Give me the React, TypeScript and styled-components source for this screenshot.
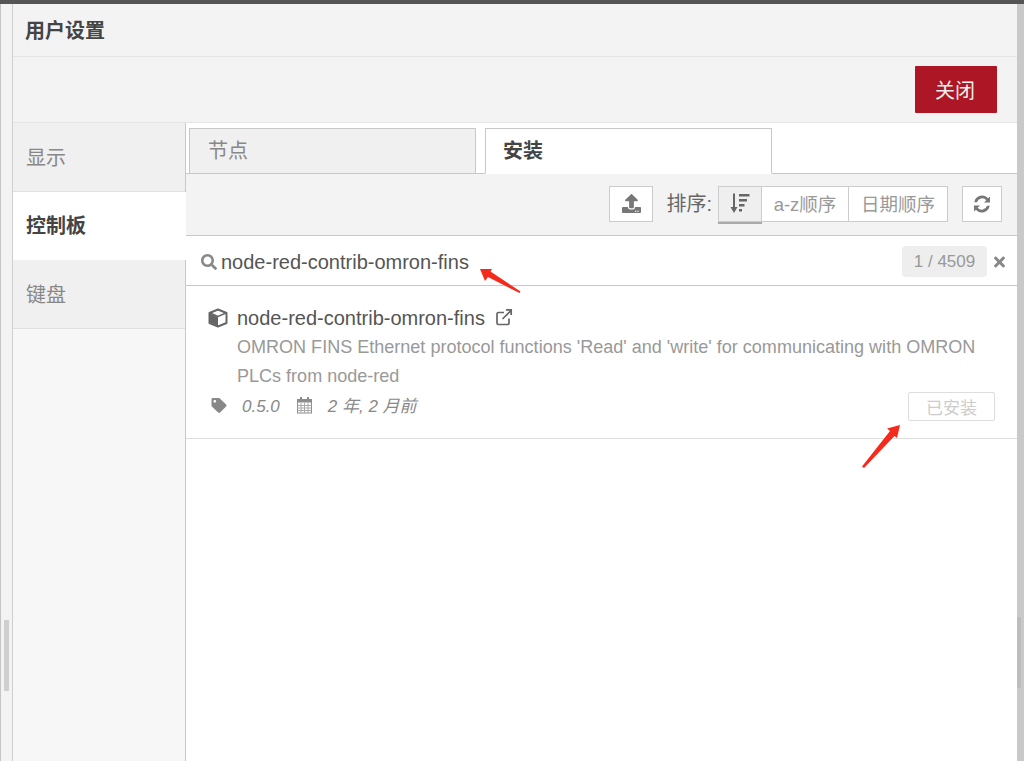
import React from 'react';
import styled, { createGlobalStyle } from 'styled-components';
import { FaSearch, FaTag, FaTimes, FaUpload } from 'react-icons/fa';

const GlobalStyle = createGlobalStyle`
  html, body {
    margin: 0;
    padding: 0;
    background: #fff;
    font-family: "Liberation Sans", "Noto Sans CJK SC", sans-serif;
  }
`;

const Page = styled.div`
  position: relative;
  width: 1024px;
  height: 761px;
  overflow: hidden;
  display: flex;
  flex-direction: column;
`;

const TopEdge = styled.div`
  height: 4px;
  background: #555;
  flex: none;
`;

const Stage = styled.div`
  flex: 1;
  min-height: 0;
  display: flex;
`;

const LeftGutter = styled.div`
  width: 13px;
  flex: none;
  box-sizing: border-box;
  background: #f3f3f3;
  border-left: 1px solid #c4c4c4;
  border-right: 1px solid #cfcfcf;
`;

const RightGutter = styled.div`
  width: 7px;
  flex: none;
  background: #c9c9c9;
`;

const Dialog = styled.div`
  flex: 1;
  min-width: 0;
  display: flex;
  flex-direction: column;
`;

const TitleBar = styled.div`
  height: 53px;
  box-sizing: border-box;
  padding: 0 12px 1px;
  display: flex;
  align-items: center;
  flex: none;
  background: #f3f3f3;
  border-bottom: 1px solid #e4e4e4;
  font-size: 20px;
  font-weight: 700;
  color: #444;
`;

const ActionBar = styled.div`
  height: 66px;
  box-sizing: border-box;
  flex: none;
  display: flex;
  justify-content: flex-end;
  padding: 9px 20px 0 0;
  background: #f3f3f3;
  border-bottom: 1px solid #e4e4e4;
`;

const CloseButton = styled.button`
  width: 82px;
  height: 47px;
  border: none;
  border-radius: 1px;
  background: #ad1625;
  color: #eee;
  font: inherit;
  font-size: 20px;
  padding: 0 2px 0 0;
`;

const Body = styled.div`
  flex: 1;
  min-height: 0;
  display: flex;
`;

const Sidebar = styled.div`
  width: 173px;
  flex: none;
  box-sizing: border-box;
  background: #f7f7f7;
  border-right: 1px solid #c8c8c8;
`;

const SideItem = styled.div<{ $active?: boolean; $height: number }>`
  height: ${p => p.$height}px;
  box-sizing: border-box;
  padding: 0 0 2px 13px;
  display: flex;
  align-items: center;
  font-size: 20px;
  font-weight: ${p => (p.$active ? 700 : 400)};
  color: ${p => (p.$active ? '#444' : '#888')};
  background: ${p => (p.$active ? '#fff' : '#f0f0f0')};
  border-bottom: 1px solid ${p => (p.$active ? '#fff' : '#e0e0e0')};
  margin-right: ${p => (p.$active ? '-1px' : '0')};
  position: relative;
`;

const Main = styled.div`
  flex: 1;
  min-width: 0;
  display: flex;
  flex-direction: column;
`;

const TabRow = styled.div`
  height: 51px;
  box-sizing: border-box;
  flex: none;
  display: flex;
  align-items: flex-end;
  gap: 9px;
  padding-left: 3px;
  border-bottom: 1px solid #c8c8c8;
`;

const Tab = styled.div<{ $active?: boolean }>`
  width: 287px;
  height: 46px;
  box-sizing: border-box;
  padding: 0 0 ${p => (p.$active ? 4 : 3)}px ${p => (p.$active ? 17 : 18)}px;
  margin-bottom: -1px;
  display: flex;
  align-items: center;
  font-size: 20px;
  font-weight: ${p => (p.$active ? 700 : 400)};
  color: ${p => (p.$active ? '#444' : '#888')};
  background: ${p => (p.$active ? '#fff' : '#f0f0f0')};
  border: 1px solid #c8c8c8;
  border-bottom: 1px solid ${p => (p.$active ? '#fff' : '#c8c8c8')};
`;

const Toolbar = styled.div`
  height: 62px;
  box-sizing: border-box;
  flex: none;
  display: flex;
  align-items: center;
  justify-content: flex-end;
  padding: 0 15px 2px 0;
  background: #f3f3f3;
  border-bottom: 1px solid #c8c8c8;
`;

const IconButton = styled.div<{ $width: number }>`
  width: ${p => p.$width}px;
  height: 36px;
  box-sizing: border-box;
  display: flex;
  align-items: center;
  justify-content: center;
  background: #fff;
  border: 1px solid #ccc;
  color: #777;
`;

const SortLabel = styled.span`
  margin: 0 7px 2px 13px;
  font-size: 20px;
  color: #666;
`;

const SortGroup = styled.div`
  display: flex;
  margin-right: 14px;
`;

const SortButton = styled.div<{ $width: number; $active?: boolean }>`
  position: relative;
  width: ${p => p.$width}px;
  height: 36px;
  box-sizing: border-box;
  display: flex;
  align-items: center;
  justify-content: center;
  font-size: 18.5px;
  padding-bottom: 2px;
  color: #999;
  background: ${p => (p.$active ? '#efefef' : '#fff')};
  border: 1px solid #ccc;
  margin-left: -1px;
  box-shadow: ${p => (p.$active ? '0 2px 0 #aaa' : 'none')};
`;

const SearchRow = styled.div`
  height: 50px;
  box-sizing: border-box;
  flex: none;
  display: flex;
  align-items: center;
  padding: 2px 11px 0 15px;
  border-bottom: 1px solid #c8c8c8;
`;

const SearchText = styled.span`
  flex: 1;
  margin: 0 0 0 4px;
  padding-top: 2px;
  font-size: 20px;
  color: #555;
`;

const CountPill = styled.span`
  width: 85px;
  height: 31px;
  display: flex;
  align-items: center;
  justify-content: center;
  border-radius: 4px;
  background: #eee;
  color: #999;
  font-size: 17px;
`;

const ClearIcon = styled(FaTimes)`
  margin-left: 6px;
  width: 13px;
  height: 16px;
  color: #888;
`;

const NodeRow = styled.div`
  height: 153px;
  box-sizing: border-box;
  flex: none;
  padding: 19px 22px 0 22px;
  border-bottom: 1px solid #ddd;
`;

const NameLine = styled.div`
  height: 28px;
  box-sizing: border-box;
  padding-bottom: 2px;
  display: flex;
  align-items: center;
  font-size: 20px;
  color: #555;
`;

const CubeIcon = styled.svg`
  width: 20px;
  height: 20px;
  margin-right: 9px;
`;

const LinkIcon = styled.svg`
  width: 18px;
  height: 18px;
  margin-left: 10px;
  margin-top: -2px;
  color: #666;
`;

const Description = styled.div`
  margin-left: 29px;
  width: 750px;
  font-size: 18.05px;
  line-height: 29px;
  color: #999;
`;

const MetaLine = styled.div`
  height: 30px;
  display: flex;
  align-items: center;
  font-size: 17px;
  font-style: italic;
  color: #888;
  padding-left: 3px;
`;

const TagIcon = styled(FaTag)`
  width: 16px;
  height: 15px;
  color: #888;
  margin-top: -2px;
`;

const Version = styled.span`
  margin: 2px 0 0 15px;
`;

const CalendarIcon = styled.svg`
  width: 17px;
  height: 18px;
  margin-left: 16px;
  margin-top: -2px;
`;

const Updated = styled.span`
  margin: 0 0 4px 15px;
  flex: 1;
`;

const InstalledButton = styled.div`
  width: 87px;
  height: 29px;
  align-self: flex-end;
  box-sizing: border-box;
  display: flex;
  align-items: center;
  justify-content: center;
  border: 1px solid #ddd;
  border-radius: 2px;
  font-size: 17px;
  font-style: normal;
  color: #ccc;
`;

const ScrollThumb = styled.div<{ $left: number; $top: number; $width: number; $color: string }>`
  position: absolute;
  left: ${p => p.$left}px;
  top: ${p => p.$top}px;
  width: ${p => p.$width}px;
  height: 71px;
  background: ${p => p.$color};
`;

const Annotation = styled.svg`
  position: absolute;
  left: 0;
  top: 0;
  width: 1024px;
  height: 761px;
  pointer-events: none;
`;

const SortIcon = () => (
  <svg width="22" height="22" viewBox="0 0 22 22" fill="#666" style={{ marginLeft: -1 }}>
    <path d="M4 1.500h2V15h2.500L5 21 1.500 15H4z" />
    <path d="M10 2h10.500v2.500H10zM10 7h8v2.500h-8zM10 12h5.500v2.500H10zM10 17h3v2.500h-3z" />
  </svg>
);

const RefreshIcon = () => (
  <svg width="18" height="18" viewBox="0 0 18 18" fill="#777">
    <path d="M17 1.500v6h-6l2.300-2.300A5.400 5.400 0 0 0 4 7.200H1.300A8 8 0 0 1 15.200 3.300z" />
    <path d="M1 16.500v-6h6l-2.300 2.300a5.400 5.400 0 0 0 9.300-2h2.700A8 8 0 0 1 2.800 14.700z" />
  </svg>
);

export default function App() {
  return (
    <>
      <GlobalStyle />
      <Page>
        <TopEdge />
        <Stage>
          <LeftGutter />
          <Dialog>
            <TitleBar>用户设置</TitleBar>
            <ActionBar>
              <CloseButton>关闭</CloseButton>
            </ActionBar>
            <Body>
              <Sidebar>
                <SideItem $height={69}>显示</SideItem>
                <SideItem $height={68} $active>控制板</SideItem>
                <SideItem $height={69}>键盘</SideItem>
              </Sidebar>
              <Main>
                <TabRow>
                  <Tab>节点</Tab>
                  <Tab $active>安装</Tab>
                </TabRow>
                <Toolbar>
                  <IconButton $width={44}>
                    <FaUpload size={19} />
                  </IconButton>
                  <SortLabel>排序:</SortLabel>
                  <SortGroup>
                    <SortButton $width={44} $active>
                      <SortIcon />
                    </SortButton>
                    <SortButton $width={88}>a-z顺序</SortButton>
                    <SortButton $width={100}>日期顺序</SortButton>
                  </SortGroup>
                  <IconButton $width={40}>
                    <RefreshIcon />
                  </IconButton>
                </Toolbar>
                <SearchRow>
                  <FaSearch size={16} color="#888" />
                  <SearchText>node-red-contrib-omron-fins</SearchText>
                  <CountPill>1 / 4509</CountPill>
                  <ClearIcon />
                </SearchRow>
                <NodeRow>
                  <NameLine>
                    <CubeIcon viewBox="0 0 20 20">
                      <path d="M10 1.500 18.500 5v10L10 18.500 1.500 15V5z" fill="#fff" stroke="#666" strokeWidth="2" strokeLinejoin="round" />
                      <path d="M2 5.500 10 9v9L2 14.500z" fill="#666" />
                      <path d="M2 5 10 8.500 18 5" fill="none" stroke="#666" strokeWidth="1.500" />
                    </CubeIcon>
                    node-red-contrib-omron-fins
                    <LinkIcon viewBox="0 0 18 18" fill="none" stroke="currentColor" strokeWidth="1.7">
                      <path d="M14 10.500V15a1.500 1.500 0 0 1-1.500 1.500h-9A1.500 1.500 0 0 1 2 15V6a1.500 1.500 0 0 1 1.500-1.500H9" />
                      <path d="M7.500 11 16 2.500M11 1.800h5.200V7" />
                    </LinkIcon>
                  </NameLine>
                  <Description>
                    OMRON FINS Ethernet protocol functions 'Read' and 'write' for communicating with OMRON PLCs from node-red
                  </Description>
                  <MetaLine>
                    <TagIcon />
                    <Version>0.5.0</Version>
                    <CalendarIcon viewBox="0 0 17 18">
                      <rect x="1.500" y="3.500" width="14" height="13.500" fill="#fff" stroke="#8c8c8c" />
                      <rect x="1" y="3" width="15" height="3.500" fill="#8c8c8c" />
                      <path d="M1.500 9.500h14M1.500 12h14M1.500 14.500h14M5 7v10M8.500 7v10M12 7v10" stroke="#a8a8a8" fill="none" />
                      <path d="M4 1h2v4H4zM11 1h2v4h-2z" fill="#8c8c8c" />
                    </CalendarIcon>
                    <Updated>2 年, 2 月前</Updated>
                    <InstalledButton>已安装</InstalledButton>
                  </MetaLine>
                </NodeRow>
              </Main>
            </Body>
          </Dialog>
          <RightGutter />
        </Stage>
        <ScrollThumb $left={4} $top={620} $width={5} $color="#cfcfcf" />
        <ScrollThumb $left={1017} $top={617} $width={4} $color="#bcbcbc" />
        <Annotation viewBox="0 0 1024 761">
          <path d="M480 269 L492 269 L490.500 271.500 L520.500 291.500 L519.500 293 L488 277 L485 281 Z" fill="#f5291c" />
          <path d="M900 425 L897 438 L894.500 436 L864 468 L862 466.500 L890 431 L887 428.500 Z" fill="#f5291c" />
        </Annotation>
      </Page>
    </>
  );
}
